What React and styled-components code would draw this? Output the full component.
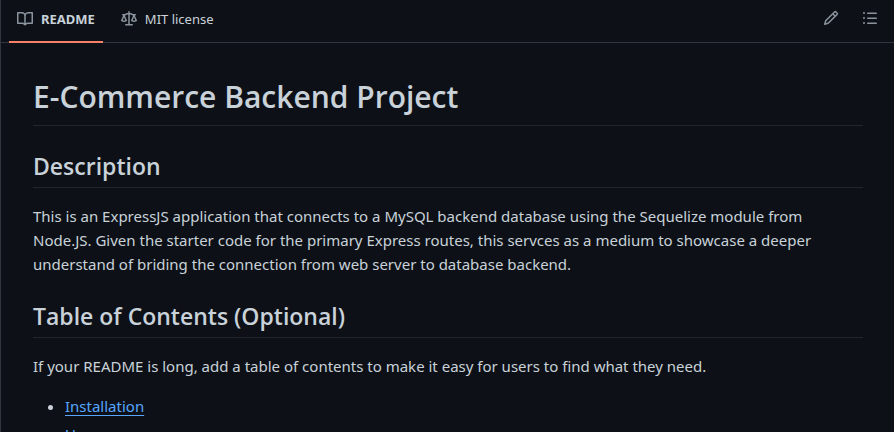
import React from "react";
import styled, { createGlobalStyle } from "styled-components";

const GlobalStyle = createGlobalStyle`
  *, *::before, *::after { box-sizing: border-box; }
  html { background: #0d1117; overflow: hidden; }
  body {
    margin: 0;
    height: 100vh;
    overflow: hidden;
    background: #0d1117;
    color: #c9d1d9;
    font-family: "Segoe UI", "Noto Sans", "Open Sans", sans-serif;
  }
`;

const Panel = styled.main`
  min-height: 100vh;
  border-left: 1px solid #30363d;
`;

const Header = styled.header`
  display: flex;
  align-items: center;
  justify-content: space-between;
  height: 43px;
  padding: 0 9px 0 8px;
  border-bottom: 1px solid #30363d;
`;

const Tabs = styled.nav`
  display: flex;
  align-self: stretch;
  gap: 10px;
`;

const Tab = styled.a`
  position: relative;
  display: flex;
  align-items: center;
  gap: 8px;
  padding: 0 8px 4px;
  color: #c9d1d9;
  font-size: 13px;
  font-weight: ${({ $active }) => ($active ? 700 : 400)};
  line-height: 20px;
  text-decoration: none;
  white-space: nowrap;

  &::after {
    content: "";
    position: absolute;
    inset: auto 0 -1px;
    height: 2px;
    background: ${({ $active }) => ($active ? "#f78166" : "transparent")};
  }
`;

const Actions = styled.div`
  display: flex;
  gap: 8px;
  padding-bottom: 6px;
`;

const IconButton = styled.button`
  display: grid;
  place-items: center;
  width: 31px;
  height: 28px;
  padding: 0;
  border: 0;
  border-radius: 6px;
  background: transparent;
  cursor: pointer;
`;

const Svg = styled.svg`
  flex: none;
  width: 16px;
  height: 16px;
  fill: #8b949e;
`;

const Article = styled.article`
  padding: 32px 31px 32px 32px;
  font-size: 15px;
  line-height: 24px;
`;

const Title = styled.h1`
  margin: 0 0 24px;
  padding-bottom: 6px;
  border-bottom: 1px solid #21262d;
  font-family: "Segoe UI", "Open Sans", "Noto Sans", sans-serif;
  font-size: 30px;
  font-weight: 600;
  line-height: 44px;
`;

const Heading = styled.h2`
  margin: 24px 0 16px;
  padding-bottom: 5px;
  border-bottom: 1px solid #21262d;
  font-family: "Segoe UI", "Open Sans", "Noto Sans", sans-serif;
  font-size: 23px;
  font-weight: 600;
  line-height: 32px;
`;

const Paragraph = styled.p`
  margin: 0 0 16px;
`;

const Contents = styled.ul`
  display: grid;
  gap: 4px;
  margin: 0;
  padding-left: 32px;
`;

const Link = styled.a`
  color: #58a6ff;
  text-decoration: underline;
  text-underline-offset: 3px;
`;

const paths = {
  book: "M0 1.75A.75.75 0 0 1 .75 1h4.253c1.227 0 2.317.59 3 1.501A3.743 3.743 0 0 1 11.006 1h4.245a.75.75 0 0 1 .75.75v10.5a.75.75 0 0 1-.75.75h-4.507a2.25 2.25 0 0 0-1.591.659l-.622.621a.75.75 0 0 1-1.06 0l-.622-.621A2.25 2.25 0 0 0 5.258 13H.75a.75.75 0 0 1-.75-.75Zm7.251 10.324.004-5.073-.002-2.253A2.25 2.25 0 0 0 5.003 2.5H1.5v9h3.757a3.75 3.75 0 0 1 1.994.574ZM8.755 4.75l-.004 7.322a3.752 3.752 0 0 1 1.992-.572H14.5v-9h-3.495a2.25 2.25 0 0 0-2.25 2.25Z",
  law: "M8.75.75V2h.985c.304 0 .603.08.867.231l1.29.736c.038.022.08.033.124.033h2.234a.75.75 0 0 1 0 1.5h-.427l2.111 4.692a.75.75 0 0 1-.154.838l-.53-.53.529.531-.001.002-.002.002-.006.006-.006.005-.01.01-.045.04c-.21.176-.441.327-.686.45C14.556 10.78 13.88 11 13 11a4.498 4.498 0 0 1-2.023-.454 3.544 3.544 0 0 1-.686-.45l-.045-.04-.016-.015-.006-.006-.004-.004v-.001a.75.75 0 0 1-.154-.838L12.178 4.5h-.162c-.305 0-.604-.079-.868-.231l-1.29-.736a.245.245 0 0 0-.124-.033H8.75V13h2.5a.75.75 0 0 1 0 1.5h-6.5a.75.75 0 0 1 0-1.5h2.5V3.5h-.984a.245.245 0 0 0-.124.033l-1.289.737c-.265.15-.564.23-.869.23h-.162l2.112 4.692a.75.75 0 0 1-.154.838l-.53-.53.529.531-.001.002-.002.002-.006.006-.016.015-.045.04c-.21.176-.441.327-.686.45C4.556 10.78 3.88 11 3 11a4.498 4.498 0 0 1-2.023-.454 3.544 3.544 0 0 1-.686-.45l-.045-.04-.016-.015-.006-.006-.004-.004v-.001a.75.75 0 0 1-.154-.838L2.178 4.5H1.75a.75.75 0 0 1 0-1.5h2.234a.249.249 0 0 0 .125-.033l1.288-.737c.265-.15.564-.23.869-.23h.984V.75a.75.75 0 0 1 1.5 0Zm2.945 8.477c.285.135.718.273 1.305.273s1.02-.138 1.305-.273L13 6.327Zm-10 0c.285.135.718.273 1.305.273s1.02-.138 1.305-.273L3 6.327Z",
  pencil: "M11.013 1.427a1.75 1.75 0 0 1 2.474 0l1.086 1.086a1.75 1.75 0 0 1 0 2.474l-8.61 8.61c-.21.21-.47.364-.756.445l-3.251.93a.75.75 0 0 1-.927-.928l.929-3.25c.081-.286.235-.547.445-.758l8.61-8.61Zm.176 4.823L9.75 4.81l-6.286 6.287a.253.253 0 0 0-.064.108l-.558 1.953 1.953-.558a.253.253 0 0 0 .108-.064Zm1.238-3.763a.25.25 0 0 0-.354 0L10.811 3.75l1.439 1.44 1.263-1.263a.25.25 0 0 0 0-.354Z",
  list: "M5.75 2.5h8.5a.75.75 0 0 1 0 1.5h-8.5a.75.75 0 0 1 0-1.5Zm0 5h8.5a.75.75 0 0 1 0 1.5h-8.5a.75.75 0 0 1 0-1.5Zm0 5h8.5a.75.75 0 0 1 0 1.5h-8.5a.75.75 0 0 1 0-1.5ZM2 14a1 1 0 1 1 0-2 1 1 0 0 1 0 2Zm1-6a1 1 0 1 1-2 0 1 1 0 0 1 2 0ZM2 4a1 1 0 1 1 0-2 1 1 0 0 1 0 2Z",
};

const Icon = ({ name }) => (
  <Svg viewBox="0 0 16 16" aria-hidden="true">
    <path d={paths[name]} />
  </Svg>
);

export default function App() {
  return (
    <>
      <GlobalStyle />
      <Panel>
        <Header>
          <Tabs aria-label="Repository files">
            <Tab href="#readme" $active aria-current="page">
              <Icon name="book" />
              README
            </Tab>
            <Tab href="#license">
              <Icon name="law" />
              MIT license
            </Tab>
          </Tabs>
          <Actions>
            <IconButton type="button" aria-label="Edit file">
              <Icon name="pencil" />
            </IconButton>
            <IconButton type="button" aria-label="Outline">
              <Icon name="list" />
            </IconButton>
          </Actions>
        </Header>
        <Article>
          <Title>E-Commerce Backend Project</Title>
          <Heading>Description</Heading>
          <Paragraph>
            This is an ExpressJS application that connects to a MySQL backend
            database using the Sequelize module from Node.JS. Given the starter
            code for the primary Express routes, this servces as a medium to
            showcase a deeper understand of briding the connection from web
            server to database backend.
          </Paragraph>
          <Heading>Table of Contents (Optional)</Heading>
          <Paragraph>
            If your README is long, add a table of contents to make it easy for
            users to find what they need.
          </Paragraph>
          <Contents>
            <li>
              <Link href="#installation">Installation</Link>
            </li>
            <li>
              <Link href="#usage">Usage</Link>
            </li>
          </Contents>
        </Article>
      </Panel>
    </>
  );
}
